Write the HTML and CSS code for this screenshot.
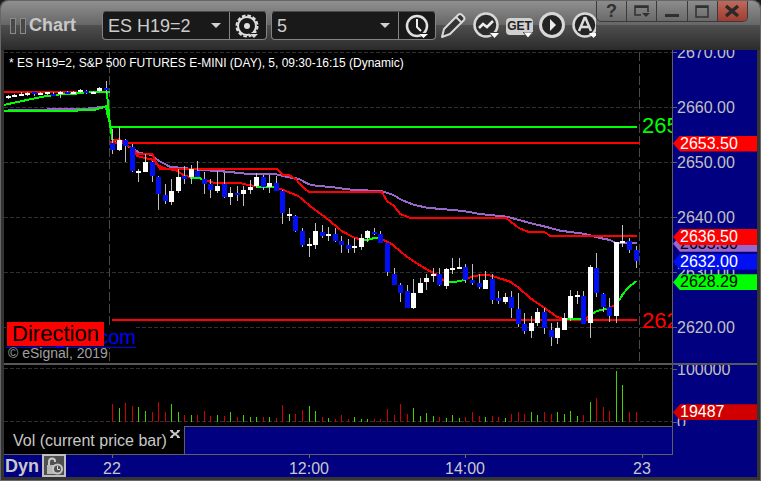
FILE: index.html
```html
<!DOCTYPE html>
<html lang="en">
<head>
<meta charset="utf-8">
<title>Chart</title>
<link rel="stylesheet" href="styles.css">
</head>
<body>
<div class="window">
  <header class="titlebar">
    <div class="grip"><i></i><i></i></div>
    <h1>Chart</h1>
    <div class="combo">
      <div class="field">
        <select aria-label="Symbol"><option>ES H19=2</option></select>
        <i class="caret"></i>
      </div>
      <button class="attached" aria-label="Symbol settings">
        <svg width="26" height="26" viewBox="0 0 26 26"><circle cx="12" cy="13" r="9" fill="none" stroke="#e0e0e0" stroke-width="2"/><circle cx="12" cy="13" r="10.500" fill="none" stroke="#e0e0e0" stroke-width="2" stroke-dasharray="3.600 1.900"/><circle cx="12" cy="13" r="3" fill="#e0e0e0"/><path d="M14 20h11l-5.500 6z" fill="#191919"/><path d="M15 21h8l-4 4z" fill="#ddd"/></svg>
      </button>
    </div>
    <div class="combo">
      <div class="field">
        <select aria-label="Interval"><option>5</option></select>
        <i class="caret"></i>
      </div>
      <button class="attached" aria-label="Time template">
        <svg width="26" height="26" viewBox="0 0 26 26"><circle cx="13" cy="13" r="10" fill="none" stroke="#e0e0e0" stroke-width="2.500"/><path d="M13 6v8l4 4" fill="none" stroke="#eee" stroke-width="2"/><path d="M14 20h11l-5 6z" fill="#191919"/><path d="M15 21h9l-4.500 4z" fill="#fff"/></svg>
      </button>
    </div>
    <nav class="tools">
      <button aria-label="Draw"><svg width="26" height="27" viewBox="0 0 26 27"><path d="M2 25l2-8L18 3q2-2 4 0l1.500 1.500q2 2 0 4L10 22z" fill="#333" stroke="#d8d8d8" stroke-width="2" stroke-linejoin="round"/><path d="M16 5l6 6" stroke="#d8d8d8" stroke-width="2"/></svg></button>
      <button aria-label="Studies"><svg width="27" height="27" viewBox="0 0 27 27"><circle cx="13" cy="13" r="11.500" fill="#2c2c2c" stroke="#d8d8d8" stroke-width="2.500"/><path d="M6 16l4-4 4 3 6-6" fill="none" stroke="#eee" stroke-width="2.500"/><path d="M15 20h12l-6 7z" fill="#3c3c3c"/><path d="M17 21h9l-4.500 5z" fill="#fff"/></svg></button>
      <button class="get" aria-label="Get studies"><span>GET</span><svg width="10" height="6" viewBox="0 0 10 6"><path d="M0 0h10L5 6z" fill="#fff" stroke="#444"/></svg></button>
      <button aria-label="Play"><svg width="27" height="27" viewBox="0 0 27 27"><circle cx="13" cy="13" r="11.500" fill="#242424" stroke="#d8d8d8" stroke-width="3"/><path d="M11 7l6 6-6 6z" fill="#eee"/></svg></button>
      <button aria-label="Alerts"><svg width="27" height="27" viewBox="0 0 27 27"><circle cx="13" cy="13" r="11.500" fill="#242424" stroke="#d8d8d8" stroke-width="2.500"/><path d="M7 19l5.500-13h1L19 19M9 15h8" fill="none" stroke="#ddd" stroke-width="2.500"/><path d="M17 21h9l-4.500 5z" fill="#fff"/></svg></button>
    </nav>
    <div class="controls">
      <button aria-label="Help"><span>?</span></button>
      <button aria-label="Dock"><svg width="16" height="16" viewBox="0 0 16 16" fill="none" stroke="#303030"><path d="M7 12H1V3h13v6" stroke-width="1.500"/><path d="M1 4h13" stroke-width="2"/><path d="M8 10h8l-4 4z" fill="#303030" stroke="none"/></svg></button>
      <button aria-label="Minimize"><svg width="16" height="16" viewBox="0 0 16 16"><path d="M1 11h14v3H1z" fill="#303030"/></svg></button>
      <button aria-label="Maximize"><svg width="16" height="16" viewBox="0 0 16 16"><path d="M2 3h12v11H2z" fill="none" stroke="#303030" stroke-width="1.500"/><path d="M2 4h12" stroke="#303030" stroke-width="2"/></svg></button>
      <button class="close" aria-label="Close"><svg width="16" height="16" viewBox="0 0 16 16"><path d="M2 3l12 10M14 3L2 13" stroke="#2a2a2a" stroke-width="3.500"/></svg></button>
    </div>
  </header>

  <main class="stage">
    <section class="pane price">
      <svg class="plot" viewBox="4 50 668 313" preserveAspectRatio="none" shape-rendering="crispEdges">
        <g class="grid">
          <path d="M4 52.500H672M4 107.500H672M4 162.500H672M4 217.500H672M4 272.500H672M4 327.500H672"/>
          <path class="session" d="M109.500 52V363M639.500 52V363"/>
        </g>
        <g class="lines" transform="translate(0 70) scale(.33333)">
          <polyline class="red" points="12,66 232,66"/>
          <polyline class="purple" points="24,120 140,120 145,117 262,117 268,114 318,111 322,135"/>
          <polyline class="green" points="12,123 230,123 234,120 285,119 300,115 320,108 323,135 330,160"/>
          <polyline class="green" points="12,105 25,102 90,88 135,79 180,73 232,71"/>
          <polyline class="green" points="228,68 331,66"/>
          <polyline class="green" points="320,66 324,100 330,165 337,208 348,219 358,215"/>
          <polyline class="green" points="334,171 1911,171"/>
          <polyline class="red" points="330,218 1920,218"/>
          <polyline class="purple" points="385,230 400,236 415,247 430,251 457,255 475,272 510,290 550,294 600,299 650,303 720,309"/>
          <polyline class="red" points="330,217 345,211 356,208 366,213 385,228 405,244 412,252 457,252 466,272 480,297 720,297"/>
          <polyline class="red" points="397,236 412,258 435,264 457,269 470,283 490,294 530,302 550,315 575,323"/>
          <polyline class="green" points="571,323 607,326"/>
          <polyline class="red" points="607,328 640,338 662,338"/>
        </g>
        <g class="lines" transform="translate(220 150) scale(.33333)">
          <polyline class="purple" points="0,63 50,68 85,72 168,73 200,81 235,86 265,102 280,106 340,112 400,120 485,123 520,135 545,150 580,164 620,173 662,177"/>
          <polyline class="red" points="0,57 172,57 187,74 208,76 228,88 248,111 267,126 485,126 502,154 522,168 541,192 570,204 662,204"/>
          <polyline class="red" points="-20,99 60,99 85,105 115,109"/>
          <polyline class="green" points="112,110 165,111"/>
          <polyline class="red" points="165,111 190,120 235,138 270,168 320,205 365,243 400,262 425,269"/>
          <polyline class="green" points="425,270 442,270 463,264 481,265"/>
          <polyline class="red" points="481,265 515,282 560,320 600,346 640,370 662,377"/>
        </g>
        <g class="lines" transform="translate(430 200) scale(.33333)">
          <polyline class="purple" points="0,24 100,33 150,42 230,50 300,69 350,81 390,92 460,101 510,114 540,120 555,128 621,129"/>
          <polyline class="red" points="0,54 228,54 250,71 265,83 290,94 300,96 342,96 350,100 360,108 621,108"/>
          <polyline class="red" points="-954,360 621,360"/>
          <polyline class="red" points="0,213 20,225 40,240 55,246"/>
          <polyline class="green" points="55,246 80,245 106,239"/>
          <polyline class="red" points="106,237 130,229 160,224 185,227 240,245 265,262 300,294 340,321 380,350 403,358"/>
          <polyline class="green" points="403,357 455,357"/>
          <polyline class="red" points="455,357 470,353 482,345"/>
          <polyline class="green" points="482,345 500,333 530,327"/>
          <polyline class="red" points="530,327 553,316"/>
          <polyline class="green" points="553,316 568,300 580,280 600,258 620,243"/>
        </g>
        <g id="candles"></g>
      </svg>
      <p class="legend">* ES H19=2, S&amp;P 500 FUTURES E-MINI (DAY), 5, 09:30-16:15 (Dynamic)</p>
      <span class="level up">2656.50</span>
      <span class="level down">2621.25</span>
      <a class="site" href="#">eSignal.com</a>
      <strong class="direction">Direction</strong>
      <small class="copyright">© eSignal, 2019</small>
    </section>
    <aside class="axis price-axis">
      <span class="mark" style="--v:2670">2670.00</span>
      <span class="mark" style="--v:2660">2660.00</span>
      <span class="mark" style="--v:2650">2650.00</span>
      <span class="mark" style="--v:2640">2640.00</span>
      <span class="mark" style="--v:2630">2630.00</span>
      <span class="mark" style="--v:2620">2620.00</span>
      <b class="tag violet" style="--v:2635.3">2635.30</b>
      <b class="tag red" style="--v:2653.5">2653.50</b>
      <b class="tag red" style="--v:2636.5">2636.50</b>
      <b class="tag blue" style="--v:2632">2632.00</b>
      <b class="tag lime" style="--v:2628.29">2628.29</b>
    </aside>
    <hr class="splitter">
    <section class="pane volume">
      <svg class="plot" viewBox="4 365 668 61" preserveAspectRatio="none" shape-rendering="crispEdges">
        <g class="grid"><path d="M4 368.500H672M4 421.500H672"/></g>
        <g id="volume"></g>
      </svg>
    </section>
    <aside class="axis volume-axis">
      <span class="mark" style="--v:100000">100000</span>
      <span class="mark" style="--v:0">0</span>
      <b class="tag crimson" style="--v:19487">19487</b>
    </aside>
    <div class="tabs">
      <div class="tab"><span>Vol (current price bar)</span>
        <button aria-label="Close tab"><svg width="10" height="8" viewBox="0 0 10 8"><path d="M1 1l8 6M9 1L1 7" stroke="#c8c8c8" stroke-width="2"/><path d="M0 .5h3M7 .5h3M0 7.500h3M7 7.500h3" stroke="#c8c8c8"/></svg></button>
      </div>
      <div class="rest"></div>
    </div>
    <footer class="timeline">
      <strong>Dyn</strong>
      <button class="lock" aria-label="Lock time range"><svg width="18" height="18" viewBox="0 0 18 18"><path d="M4 9V5q0-3.500 3-3.500T10 4v1" fill="none" stroke="#c8c8c8" stroke-width="2"/><path d="M2 8h8v9H2z" fill="#b8b8b8"/><circle cx="12.500" cy="12" r="4.500" fill="#505050" stroke="#c8c8c8" stroke-width="2"/><path d="M12.500 9v3.500H15" fill="none" stroke="#ddd"/></svg></button>
      <time style="--x:108">22</time>
      <time style="--x:305">12:00</time>
      <time style="--x:461">14:00</time>
      <time style="--x:638">23</time>
    </footer>
  </main>
</div>
<script src="chart.js"></script>
</body>
</html>
```
FILE: styles.css
```css
* { box-sizing: border-box; }
body {
  margin: 0;
  background: #1c1c1c;
  color: #c8c8c8;
  font: 16px/20px "Liberation Sans", Arial, sans-serif;
}
button { margin: 0; padding: 0; border: 0; background: none; color: inherit; font: inherit; }
svg { display: block; }

.window {
  display: flex;
  flex-direction: column;
  height: 100vh;
  min-height: 400px;
  padding: 0 4px 4px;
  border-radius: 8px 8px 0 0;
  background: #343434;
  box-shadow: inset 1px 0 #666, inset -1px -1px #666;
}

.titlebar {
  display: flex;
  flex: none;
  align-items: center;
  height: 50px;
  margin: 0 -3px;
  padding-left: 9px;
  border-top: 1px solid #666;
  border-radius: 8px 8px 0 0;
  background: linear-gradient(#909090, #666 24px, #505050 24px, #2a2a2a);
  position: relative;
}
.grip { display: flex; gap: 4px; }
.grip i { width: 6px; height: 16px; border: 1px solid #8a8a8a; background: #484848; }
h1 { margin: 0 26px 2px 3px; font-size: 18px; line-height: 20px; }

.combo {
  display: flex;
  width: 165px;
  height: 29px;
  margin-right: 4px;
  border: 1px solid #848484;
  border-top-color: #4a4a4a;
  border-radius: 4px;
  background: #191919;
}
.field { position: relative; flex: 1; }
.field select {
  appearance: none;
  width: 100%;
  height: 100%;
  padding: 0 24px 0 5px;
  border: 0;
  background: none;
  color: #ccc;
  font: 18px/24px "Liberation Sans", Arial, sans-serif;
}
.caret {
  position: absolute;
  right: 8px;
  top: 11px;
  border: 5px solid transparent;
  border-top-color: #d0d0d0;
  border-bottom: 0;
  pointer-events: none;
}
.attached { display: grid; place-items: center; width: 37px; border-left: 1px solid #848484; }

.tools { display: flex; flex: 1; gap: 6px; align-items: center; min-width: 0; margin-right: 164px; overflow: hidden; }
.tools button { flex: none; }
.tools button:first-child { margin-right: 1px; }
.get { position: relative; width: 27px; height: 26px; }
.get span {
  display: block;
  margin-top: 2px;
  border-radius: 4px;
  background: #d0d0d0;
  color: #222;
  font: bold 12px/17px "Liberation Sans", Arial, sans-serif;
}
.get svg { position: absolute; right: 0; bottom: 1px; }

.controls {
  position: absolute;
  top: 0;
  right: 12px;
  display: flex;
  width: 152px;
  height: 21px;
  border: 1px solid #3a3a3a;
  border-top: 0;
  border-radius: 0 0 5px 5px;
  background: linear-gradient(#8c8c8c, #6a6a6a);
  overflow: hidden;
}
.controls button { display: grid; flex: 1; place-items: center; border-right: 1px solid #3a3a3a; color: #303030; font: bold 18px/20px "Liberation Sans", Arial, sans-serif; }
.controls .close { border: 0; background: linear-gradient(#c0685c, #a03c30); }

.stage {
  display: grid;
  flex: 1;
  grid-template-columns: minmax(0, 1fr) 85px;
  grid-template-rows: minmax(0, 1fr) 2px 61px 29px 22px;
  background: #000080;
  min-height: 0;
}
.pane { position: relative; overflow: hidden; background: #000; }
.plot { position: absolute; width: 100%; height: 100%; }
.grid path { stroke: #303030; stroke-dasharray: 4 2; }
.grid .session { stroke: #4a4a4a; stroke-dasharray: 9 3; }
.lines { fill: none; stroke-width: 6; }
.lines .red { stroke: #f00; }
.lines .green { stroke: #0f0; }
.lines .purple { stroke: #9966cc; }
.wick { fill: #c0c0c0; }
.rise { fill: #fff; }
.fall { fill: #0010f0; }
.bought { fill: #46d000; }
.sold { fill: #d00000; }

.legend { position: absolute; top: 5px; left: 5px; margin: 0; color: #fff; font-size: 12px; line-height: 16px; white-space: nowrap; }
.level { position: absolute; left: calc(100% - 30px); font-size: 22px; line-height: 24px; }
.up { top: 64px; color: #0f0; }
.down { bottom: 30px; color: #f00; }
.site { position: absolute; left: 2px; bottom: 15px; width: 130px; border-bottom: 1px solid #00f; background: #000; color: #00f; font-size: 20px; line-height: 20px; text-align: right; text-decoration: none; }
.direction { position: absolute; left: 3px; bottom: 17px; width: 97px; background: #f00; color: #000; font-size: 22px; font-weight: normal; line-height: 24px; text-align: center; }
.copyright { position: absolute; left: 4px; bottom: 2px; color: #a0a0a0; font-size: 14px; line-height: 16px; }

.axis { position: relative; overflow: hidden; border-left: 1px solid #606060; }
.mark, .tag { position: absolute; top: var(--y); left: 0; line-height: 16px; transform: translateY(-50%); }
.price-axis > * { --y: calc((2670.5 - var(--v)) / 56.9 * 100%); }
.volume-axis > * { --y: calc((108500 - var(--v)) / 115000 * 100%); }
.mark { padding-left: 4px; color: #c0c0c0; }
.mark::before { content: ""; position: absolute; left: 0; top: 7px; width: 4px; border-top: 1px solid #606060; }
.tag { width: 100%; padding-left: 7px; color: #fff; font-weight: normal; clip-path: polygon(0 50%, 7px 0, 100% 0, 100% 100%, 7px 100%); }
.tag.red { background: #f00; }
.violet { background: #9966cc; }
.tag.violet, .tag.lime { color: #000; }
.blue { background: #0010f0; }
.lime { background: #0f0; }
.crimson { background: #d00000; }

.splitter { grid-column: 1 / -1; width: 100%; height: 2px; margin: 0; border: 0; background: #585858; }
.tabs { display: flex; border-right: 1px solid #606060; border-bottom: 1px solid #606060; width: calc(100% + 1px); }
.tab { display: flex; justify-content: space-between; width: 181px; padding: 4px 4px 0 9px; border-right: 1px solid #606060; background: #000; line-height: 22px; white-space: nowrap; }
.tab button { align-self: flex-start; }
.rest { flex: 1; border-top: 1px solid #606060; }
.timeline { position: relative; grid-column: 1 / -1; display: flex; gap: 3px; padding-left: 1px; }
.timeline strong { font-size: 18px; line-height: 22px; }
.lock { display: grid; place-items: center; width: 24px; height: 23px; margin-top: -1px; border: 2px solid #c0c0c0; background: #505050; }
.timeline time { position: absolute; top: 0; left: calc(var(--x) / 753 * 100%); padding-top: 4px; transform: translateX(-50%); }
.timeline time::before { content: ""; position: absolute; top: 0; left: 50%; height: 3px; border-left: 1px solid #707070; }
```
FILE: chart.js
```js
// Series are stored in thirds of a chart unit, relative to each block's origin.
// Candle: [x, high, low, body top, body bottom, rising]
const candleBlocks = [
  { x: 0, y: 70, rows: [
    [25,75,87,78,84,1],[43,72,81,75,81,1],[64,66,78,72,78,1],[82,66,78,69,75,1],[103,66,78,66,72,0],
    [121,66,75,69,75,1],[142,66,75,66,72,1],[160,66,78,72,78,0],[181,63,84,66,72,1],[202,63,72,66,72,0],
    [220,63,72,66,72,1],[241,57,69,60,66,1],[259,60,72,63,69,0],[280,63,72,66,72,1],[298,51,66,54,63,1],
    [319,33,72,54,60,0],[337,177,252,219,240,0],[358,171,243,210,240,1],[376,207,276,210,228,0],
    [397,222,306,231,303,0],[415,297,336,303,309,1],[436,252,306,276,306,1],[457,273,336,276,318,0],
    [475,318,420,321,372,0],[496,342,402,375,393,0],[514,327,405,363,396,1],[535,297,369,321,363,1],
    [553,288,342,318,327,0],[574,285,342,297,321,1],[592,273,321,303,321,0],[613,306,372,327,342,0],
    [631,327,384,342,360,0],[652,303,369,348,363,1],[673,309,384,342,381,0],[691,351,405,369,381,1]
  ]},
  { x: 220, y: 150, rows: [
    [52,108,153,129,135,0],[70,108,168,120,132,1],[91,90,132,111,120,1],[109,69,114,81,108,1],
    [130,75,120,81,111,0],[148,75,129,99,111,1],[169,78,123,99,123,0],[187,120,222,123,189,0],
    [208,174,213,192,198,1],[226,195,246,198,243,0],[247,234,291,243,285,0],[268,264,321,282,288,1],
    [286,219,297,243,285,1],[307,225,264,246,258,0],[325,231,273,252,258,1],[346,234,276,252,273,0],
    [364,258,309,273,285,0],[385,267,309,285,297,0],[403,264,309,288,294,1],[424,252,300,264,291,1],
    [442,240,276,243,264,1],[463,234,255,246,252,0],[481,243,279,252,279,0],[502,279,378,279,366,0],
    [523,354,405,372,405,0],[541,399,456,405,429,0],[562,405,474,423,474,0],[580,387,477,429,474,1],
    [601,384,429,399,429,1],[619,372,420,384,396,1]
  ]},
  { x: 430, y: 200, rows: [
    [10,204,246,222,228,1],[28,204,258,222,255,0],[49,204,267,207,258,1],[67,174,222,204,210,1],
    [88,174,207,201,207,1],[106,192,249,201,240,0],[127,192,255,240,249,0],[148,222,267,249,261,0],
    [166,213,267,240,267,1],[187,222,312,237,300,0],[205,273,312,294,303,0],[226,279,312,291,306,1],
    [244,273,354,291,324,0],[265,279,381,327,372,0],[283,339,402,372,393,0],[304,348,414,369,393,1],
    [322,324,378,336,369,1],[343,324,402,336,384,0],[364,369,438,390,411,0],[382,366,432,384,414,1],
    [403,339,390,354,390,1],[421,270,363,288,354,1],[442,273,312,285,291,1],[460,273,372,288,372,0],
    [481,195,414,201,369,1],[499,159,291,204,279,0],[520,279,336,282,321,0],[538,294,366,321,348,0],
    [559,126,369,126,348,1],[577,75,141,123,129,1],[598,114,159,123,150,0],[619,138,204,150,183,0]
  ]}
];

// Volume bar: [x, height, bought]
const volumeBlocks = [
  { x: 0, rows: [
    [319,3,0],[337,54,0],[358,42,1],[376,57,0],[397,48,0],[415,45,1],[436,33,1],[457,30,0],[475,60,0],
    [496,30,0],[514,54,1],[535,30,1],[553,21,0],[574,21,1],[592,21,0],[613,33,0],[631,18,0],[652,21,1],
    [673,18,0],[691,30,1],[712,15,0]
  ]},
  { x: 240, rows: [
    [10,21,1],[31,15,1],[49,15,1],[70,15,0],[88,15,1],[109,12,0],[127,51,0],[148,24,1],[166,24,0],
    [187,36,0],[208,48,1],[226,33,1],[247,15,0],[265,12,1],[286,9,0],[304,21,0],[325,9,0],[343,15,1],
    [364,9,1],[382,9,1],[403,9,0],[421,9,0],[442,39,0],[463,21,0],[481,54,0],[502,24,0],[520,42,1],
    [541,18,1],[559,27,1],[580,18,1],[598,15,0],[619,12,1],[637,21,1],[658,12,1],[676,15,0],[697,30,0],
    [718,18,0],[736,15,1],[757,18,0],[775,15,0]
  ]},
  { x: 500, rows: [
    [16,12,1],[34,24,0],[55,30,0],[73,24,0],[94,30,1],[112,21,1],[133,30,0],[154,24,0],[172,30,1],
    [193,24,1],[211,33,1],[232,18,1],[250,21,0],[271,60,1],[289,72,0],[310,45,0],[328,33,0],
    [349,153,1],[367,111,1],[388,30,0],[409,30,0]
  ]}
];

function bar(parent, name, x, y, width, height) {
  const rect = document.createElementNS("http://www.w3.org/2000/svg", "rect");
  rect.setAttribute("class", name);
  rect.setAttribute("x", x);
  rect.setAttribute("y", y);
  rect.setAttribute("width", width);
  rect.setAttribute("height", height);
  parent.append(rect);
}

const candles = document.getElementById("candles");
for (const block of candleBlocks) {
  for (const [cx, high, low, top, bottom, rising] of block.rows) {
    const x = block.x + Math.floor(cx / 3);
    bar(candles, "wick", x, block.y + high / 3, 1, (low - high) / 3);
    bar(candles, rising ? "rise" : "fall", x - 2, block.y + top / 3, 5, (bottom - top) / 3);
  }
}

const volume = document.getElementById("volume");
for (const block of volumeBlocks) {
  for (const [cx, height, bought] of block.rows) {
    bar(volume, bought ? "bought" : "sold", block.x + Math.floor(cx / 3), 422 - height / 3, 1, height / 3);
  }
}
```
